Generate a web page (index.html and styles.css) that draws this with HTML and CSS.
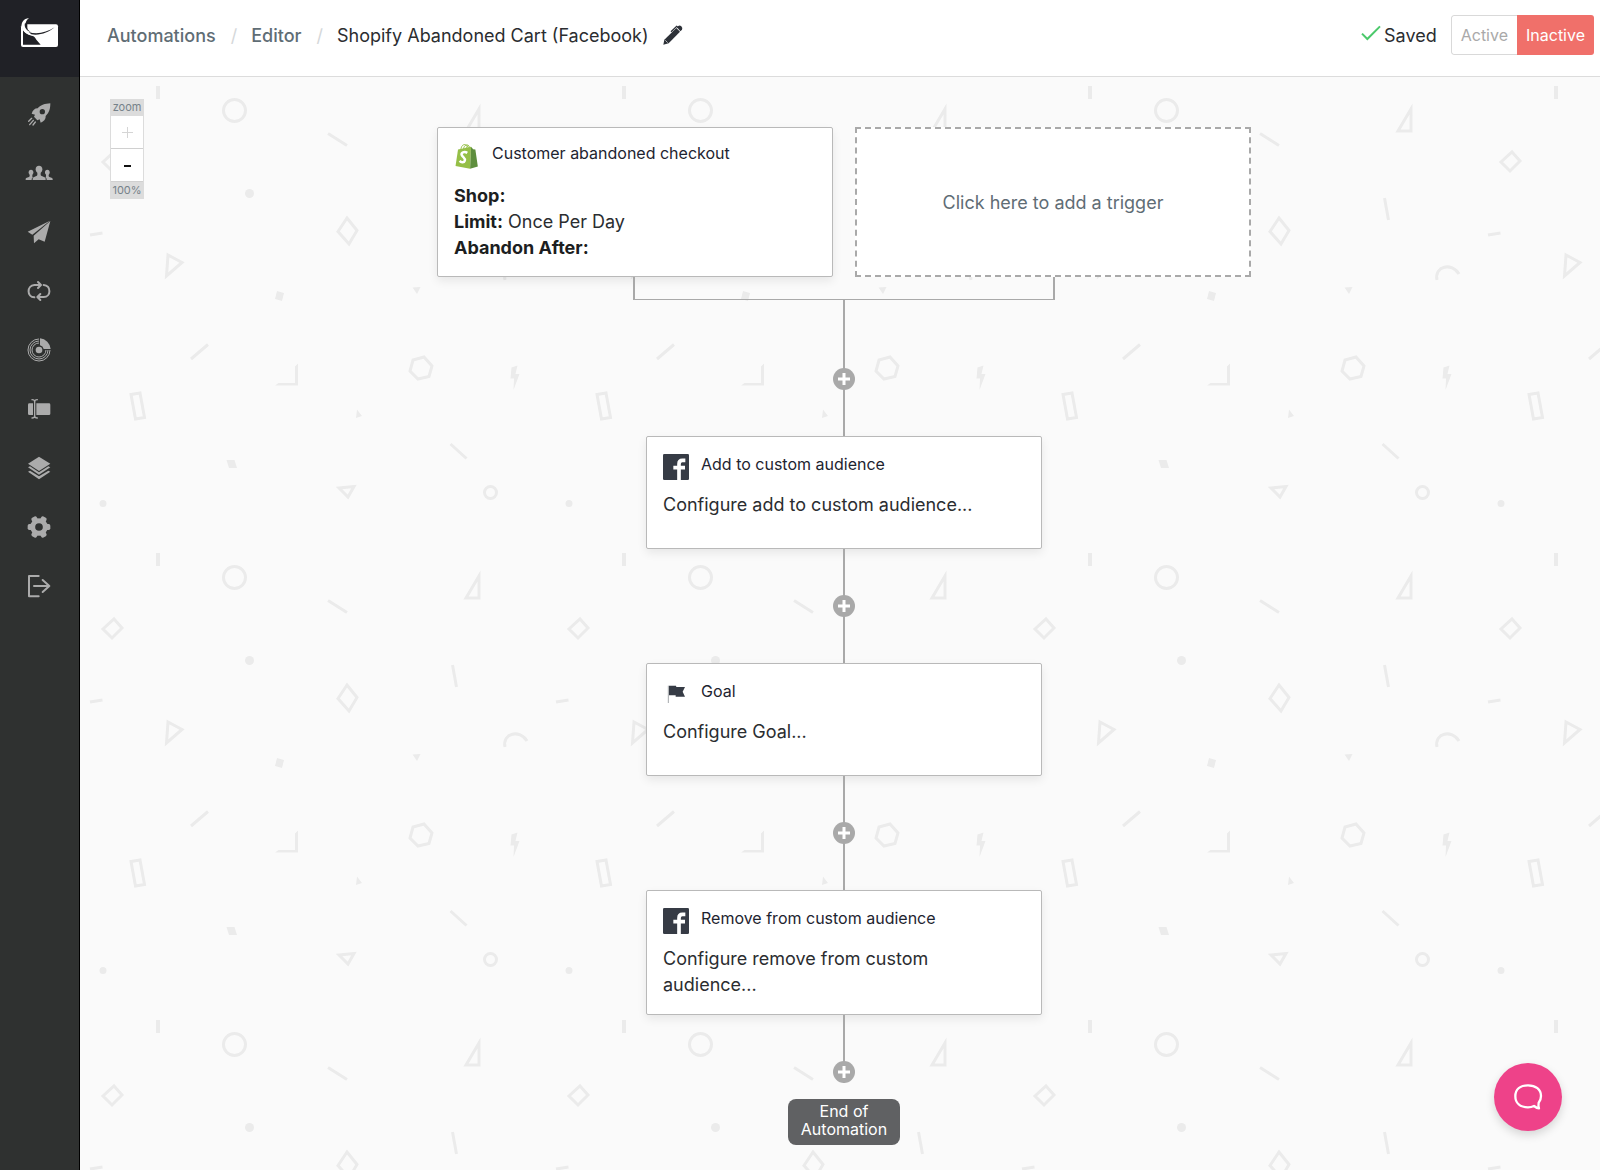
FILE: index.html
```
<!DOCTYPE html>
<html lang="en">
<head>
<meta charset="UTF-8">
<title>Shopify Abandoned Cart (Facebook)</title>
<link rel="stylesheet" href="styles.css">
</head>
<body>
<div class="sidebar">
    <a class="logo" href="#" aria-label="Home">
        <svg width="39" height="31" viewBox="0 0 117 93">
            <rect x="3" y="22" width="111" height="68" rx="6" fill="#fff"/>
            <path d="M9 38C14 46 24 53 38 57C44 59 46 63 49 68L62 83H9Z" fill="#202126"/>
            <path d="M0 18H22V36H9Z" fill="#202126"/>
            <path d="M27 3C10 5 3 18 5 30C8 45 22 54 40 56C32 50 24 46 20 38C14 26 15 12 27 3Z" fill="#fff"/>
            <path d="M15 18C11 30 20 41 32 46L24 38C20 32 20 26 19 21Z" fill="#202126"/>
            <path d="M26 45C50 53 80 47 104 31C86 47 60 56 34 52Z" fill="#202126"/>
        </svg>
    </a>
    <nav class="menu">
        <a href="#" aria-label="Campaigns">
            <svg viewBox="-6 -6 84 84">
                <path fill-rule="evenodd" d="M70 4C54 5 42 8 32 19C23 19 17 25 14 35L24 38L21 44L31 55L38 52L41 62C51 58 57 51 56 42C67 31 70 20 70 4ZM46 21A8 8 0 1 0 46 37A8 8 0 1 0 46 21Z"/>
                <path class="line thin" d="M14 49L5 58M19 55L8 68M25 60L18 69"/>
            </svg>
        </a>
        <a href="#" aria-label="Contacts">
            <svg viewBox="-6 -6 84 84">
                <ellipse cx="36" cy="25" rx="10" ry="11"/>
                <path d="M17 57V53C17 47 30 47 31 42V32H41V42C42 47 56 47 56 53V57Z"/>
                <ellipse cx="12" cy="34" rx="7" ry="8"/>
                <path d="M-4 57V54C-4 50 7 49 8 46V38H16V46C16 48 17 48 18 49C15 51 14 53 14 57Z"/>
                <ellipse cx="61" cy="34" rx="7" ry="8"/>
                <path d="M77 57V54C77 50 66 49 65 46V38H57V46C57 48 56 48 55 49C58 51 59 53 59 57Z"/>
            </svg>
        </a>
        <a href="#" aria-label="Send">
            <svg viewBox="-6 -6 84 84">
                <path d="M69 2L2 35L16 44Z"/>
                <path d="M70 3L20 47L21 70L35 58L53 65Z"/>
            </svg>
        </a>
        <a href="#" aria-label="Automations">
            <svg viewBox="-6 -6 84 84">
                <path class="line" d="M22 55C-1 54 -1 19 22 18H40M33 9L42 18L33 27M50 18C73 19 73 54 50 54H32M40 45L31 54L40 63"/>
            </svg>
        </a>
        <a href="#" aria-label="Reports">
            <svg viewBox="-6 -6 84 84">
                <path d="M39 1A35 35 0 0 1 71 33H50A14 14 0 0 0 39 22Z"/>
                <circle cx="36" cy="36" r="10"/>
                <path class="ring" d="M36 3A33 33 0 1 0 69 36M36 9A27 27 0 1 0 63 36M36 15A21 21 0 1 0 57 36"/>
            </svg>
        </a>
        <a href="#" aria-label="Forms">
            <svg viewBox="-6 -6 84 84">
                <path d="M7 19H18V54H7Q3 54 3 50V23Q3 19 7 19ZM28 19H66Q70 19 70 23V50Q70 54 66 54H28Z"/>
                <path class="line thin" d="M15 8Q23 8 23 14Q23 8 31 8M23 14V57M15 63Q23 63 23 57Q23 63 31 63"/>
            </svg>
        </a>
        <a href="#" aria-label="Templates">
            <svg viewBox="-6 -6 84 84">
                <path d="M36 2L70 23L36 45L3 23Z"/>
                <path d="M3 34L9 31L36 49L64 31L70 34L36 56Z"/>
                <path d="M3 47L9 44L36 61L64 44L70 47L36 70Z"/>
            </svg>
        </a>
        <a href="#" aria-label="Settings">
            <svg viewBox="-6 -6 84 84">
                <circle cx="36" cy="36" r="19" fill="none" stroke="#ababab" stroke-width="15"/>
                <rect x="54" y="27" width="16" height="18" rx="5"/>
                <rect x="54" y="27" width="16" height="18" rx="5" transform="rotate(60 36 36)"/>
                <rect x="54" y="27" width="16" height="18" rx="5" transform="rotate(120 36 36)"/>
                <rect x="54" y="27" width="16" height="18" rx="5" transform="rotate(180 36 36)"/>
                <rect x="54" y="27" width="16" height="18" rx="5" transform="rotate(240 36 36)"/>
                <rect x="54" y="27" width="16" height="18" rx="5" transform="rotate(300 36 36)"/>
            </svg>
        </a>
        <a href="#" aria-label="Log out">
            <svg viewBox="-6 -6 84 84">
                <path class="line" d="M35 6H6V67H35M21 36H67M47 18L67 36L47 54"/>
            </svg>
        </a>
    </nav>
</div>

<div class="page">
    <header class="topbar">
        <nav class="crumbs">
            <a href="#">Automations</a>
            <span class="sep">/</span>
            <a href="#">Editor</a>
            <span class="sep">/</span>
            <h1>Shopify Abandoned Cart (Facebook)</h1>
            <button class="edit" aria-label="Rename">
                <svg width="20" height="20" viewBox="0 0 60 60">
                    <path d="M1 59L4 44L40 9L51 20L17 55Z" fill="#2d3138"/>
                    <path d="M42 7L46 3Q50 0 55 4Q60 9 57 14L52 19Z" fill="#2d3138"/>
                    <path d="M24 20L41 4L46 8" fill="none" stroke="#2d3138" stroke-width="4"/>
                    <path d="M7 46L14 53" stroke="#fff" stroke-width="2"/>
                </svg>
            </button>
        </nav>
        <div class="status">
            <span class="saved">
                <svg width="20" height="20" viewBox="0 0 60 60"><path d="M3 26L19 42L57 4" fill="none" stroke="#4bc96b" stroke-width="6"/></svg>
                Saved
            </span>
            <div class="toggle">
                <button>Active</button>
                <button class="on">Inactive</button>
            </div>
        </div>
    </header>

    <main class="canvas">
        <div class="zoom">
            <span>zoom</span>
            <button disabled aria-label="Zoom in"><svg width="11" height="11" viewBox="0 0 11 11"><path d="M5 0h1v5h5v1h-5v5h-1v-5h-5v-1h5z"/></svg></button>
            <button aria-label="Zoom out"><svg width="11" height="11" viewBox="0 0 11 11"><path d="M2 5h7v2h-7z"/></svg></button>
            <span>100%</span>
        </div>

        <div class="flow">
            <div class="triggers">
                <section class="card">
                    <div class="head">
                        <svg class="icon" viewBox="-3 -1 80 84">
                            <path d="M17 22C18 2 34 -3 42 16M25 21C27 5 40 -2 46 14M34 18C35 10 40 6 43 8" fill="none" stroke="#95bf47" stroke-width="3"/>
                            <path d="M8 20L50 11L47 82L0 73Z" fill="#95bf47"/>
                            <path d="M50 11L57 19L64 20L72 75L47 82Z" fill="#5e8e3e"/>
                            <path d="M38 31C28 25 17 30 20 38C23 45 33 47 30 56C27 65 17 61 13 57" fill="none" stroke="#fff" stroke-width="8"/>
                        </svg>
                        <h2>Customer abandoned checkout</h2>
                    </div>
                    <p><b>Shop:</b></p>
                    <p><b>Limit:</b> Once Per Day</p>
                    <p><b>Abandon After:</b></p>
                </section>
                <button class="addtrigger">Click here to add a trigger</button>
            </div>
            <div class="bracket"></div>
            <div class="stub"></div>
            <div class="join"><button class="plus" aria-label="Add step"><svg width="22" height="22" viewBox="0 0 22 22"><path d="M11 5v12M5 11h12" stroke="#fff" stroke-width="3"/></svg></button></div>

            <section class="card">
                <div class="head">
                    <svg class="icon" viewBox="0 0 78 78">
                        <rect width="78" height="78" rx="4" fill="#363b45"/>
                        <path d="M48 78V30Q48 19 58 19H67M31 41H66" fill="none" stroke="#fff" stroke-width="11"/>
                    </svg>
                    <h2>Add to custom audience</h2>
                </div>
                <p>Configure add to custom audience...</p>
            </section>
            <div class="join"><button class="plus" aria-label="Add step"><svg width="22" height="22" viewBox="0 0 22 22"><path d="M11 5v12M5 11h12" stroke="#fff" stroke-width="3"/></svg></button></div>

            <section class="card">
                <div class="head">
                    <svg class="icon" viewBox="0 0 78 78">
                        <path d="M16 14V66" stroke="#777b82" stroke-width="2"/>
                        <path d="M18 14H39L40 18H66L59 32L66 47H38V43H18Z" fill="#363b45"/>
                    </svg>
                    <h2>Goal</h2>
                </div>
                <p>Configure Goal...</p>
            </section>
            <div class="join"><button class="plus" aria-label="Add step"><svg width="22" height="22" viewBox="0 0 22 22"><path d="M11 5v12M5 11h12" stroke="#fff" stroke-width="3"/></svg></button></div>

            <section class="card">
                <div class="head">
                    <svg class="icon" viewBox="0 0 78 78">
                        <rect width="78" height="78" rx="4" fill="#363b45"/>
                        <path d="M48 78V30Q48 19 58 19H67M31 41H66" fill="none" stroke="#fff" stroke-width="11"/>
                    </svg>
                    <h2>Remove from custom audience</h2>
                </div>
                <p>Configure remove from custom audience...</p>
            </section>
            <div class="join last"><button class="plus" aria-label="Add step"><svg width="22" height="22" viewBox="0 0 22 22"><path d="M11 5v12M5 11h12" stroke="#fff" stroke-width="3"/></svg></button></div>
            <div class="end">End of Automation</div>
        </div>
    </main>
</div>

<button class="chat" aria-label="Chat">
    <svg width="30" height="28" viewBox="0 0 90 84">
        <path d="M77 59C82 53 84 47 84 39C84 19 68 7 45 7C22 7 7 19 7 40C7 61 22 73 45 73C53 73 59 71 63 69C68 73 73 76 78 76C76 71 76 65 77 59Z" fill="none" stroke="#fff" stroke-width="7" stroke-linejoin="round"/>
    </svg>
</button>
</body>
</html>
```
FILE: styles.css
```
* {
    box-sizing: border-box;
}
body {
    margin: 0;
    display: flex;
    min-height: 100vh;
    font-family: Inter, sans-serif;
    font-size: 18px;
    color: #2b2d30;
    background: #fafafa;
}
button {
    font: inherit;
    padding: 0;
    border: 0;
    cursor: pointer;
}
a {
    text-decoration: none;
}
svg {
    display: block;
}
h1, h2, p {
    margin: 0;
    font-size: inherit;
    font-weight: 400;
}

/* sidebar */
.sidebar {
    width: 80px;
    flex: none;
    background: #2f3130;
    border-right: 1px solid #000;
}
.logo {
    display: flex;
    justify-content: center;
    height: 77px;
    padding-top: 17px;
    background: #202126;
}
.menu {
    display: flex;
    flex-direction: column;
    padding: 7px 1px 0 0;
}
.menu a {
    display: flex;
    align-items: center;
    justify-content: center;
    height: 59px;
}
.menu svg {
    width: 28px;
    height: 28px;
    fill: #ababab;
}
.menu .line, .menu .ring {
    fill: none;
    stroke: #ababab;
    stroke-width: 6;
    stroke-linecap: round;
    stroke-linejoin: round;
}
.menu .thin {
    stroke-width: 4;
}
.menu .ring {
    stroke-width: 3;
    stroke-linecap: butt;
}

/* top bar */
.page {
    flex: 1;
    min-width: 0;
    display: flex;
    flex-direction: column;
}
.topbar {
    display: flex;
    align-items: center;
    justify-content: space-between;
    height: 77px;
    padding: 0 6px 6px 27px;
    background: #fff;
    border-bottom: 1px solid #dcdcdc;
}
.crumbs {
    display: flex;
    align-items: center;
}
.crumbs a {
    color: #5f6d75;
    font-weight: 500;
}
.sep {
    margin: 0 14px 0 15px;
    color: #d5d8da;
}
.edit {
    margin-left: 14px;
    background: none;
}
.status {
    display: flex;
    align-items: center;
    gap: 14px;
}
.saved {
    display: flex;
    align-items: center;
    gap: 3px;
}
.toggle {
    display: flex;
    height: 40px;
    border-radius: 3px;
    overflow: hidden;
}
.toggle button {
    padding: 0 9px;
    font-size: 16px;
    color: #a9a9a9;
    background: #fff;
    border: 1px solid #d9d9d9;
    border-right: 0;
    border-radius: 3px 0 0 3px;
}
.toggle .on {
    color: #fff;
    background: #f0706a;
    border: 0;
    border-radius: 0;
}

/* canvas, the doodle tile repeats every 466px */
.canvas {
    position: relative;
    flex: 1;
    padding: 50px 0 24px 8px;
    background-color: #fafafa;
    background-size: 466px 467px;
    background-position: 0 -1px;
    background-image: url("data:image/svg+xml,%3Csvg xmlns='http://www.w3.org/2000/svg' width='466' height='467'%3E%3Cg fill='none' stroke='%23ebebeb' stroke-width='3'%3E%3Ccircle cx='154.5' cy='34.5' r='11'/%3E%3Cpath d='M248 57.5L267 69.5M34 76L42 85L32 95L23 86ZM267 142L277 154.5L269 168L258 155.5ZM10 159L22.500 157M88 179L102 186.500L86.500 200ZM372.500 122L376.500 144M425 204C422 190 440 186 447 198M399 33V55H386ZM111 283L128 268.500M344 281L352 290L349 300.500L338 303L330 295L333 284ZM51 318.500L60 317L64.500 341.500L55.500 343ZM370.500 368L386.500 382.500M259 412L274 410.500L268 421Z'/%3E%3Ccircle cx='410.5' cy='416.5' r='6'/%3E%3C/g%3E%3Cg fill='%23ebebeb'%3E%3Cpath d='M76 10H80V23H76ZM332.500 211.500L340.500 211L337 218ZM195 309.500H218V287.500L215 290.500V307H198.500ZM431.500 291.500L437.500 289.500L435.500 298H439.500L433.500 314L434 302.500H430.500ZM277 333.500L282 340L276 342ZM146.500 384H154.500L157 392H149ZM197 215L204 217L202 225L195 223Z'/%3E%3Ccircle cx='169.5' cy='117.5' r='4.500'/%3E%3Ccircle cx='23' cy='427.5' r='3.500'/%3E%3C/g%3E%3C/svg%3E");
}
.zoom {
    position: absolute;
    left: 30px;
    top: 22px;
    width: 34px;
    display: flex;
    flex-direction: column;
    padding: 0 1px;
    font-size: 11px;
    line-height: 17px;
    text-align: center;
    color: #76828a;
    background: #dcdcdc;
}
.zoom button {
    display: flex;
    align-items: center;
    justify-content: center;
    height: 33px;
    background: #fff;
    border-bottom: 1px solid #d0d0d0;
    fill: #111;
}
.zoom button:disabled {
    fill: #d5d5d5;
}

/* flow */
.flow {
    display: flex;
    flex-direction: column;
    align-items: center;
}
.triggers {
    display: flex;
    gap: 22px;
}
.card {
    width: 396px;
    min-height: 113px;
    padding: 16px 64px 16px 16px;
    line-height: 26px;
    font-weight: 300;
    background: #fff;
    border: 1px solid #b9b9b9;
    border-radius: 2px;
    box-shadow: 0 4px 10px rgba(0, 0, 0, .08);
}
.triggers .card {
    min-height: 150px;
    padding-top: 14px;
    padding-bottom: 12px;
}
.card b {
    font-weight: 700;
    color: #1c1e21;
}
.head {
    display: flex;
    gap: 12px;
    margin-bottom: 12px;
}
.triggers .head {
    margin-bottom: 14px;
}
.head h2 {
    font-size: 16px;
    line-height: 22px;
    color: #1e2430;
}
.icon {
    width: 26px;
    height: 26px;
    margin-top: 1px;
}
.addtrigger {
    width: 396px;
    color: #5f6d75;
    background: #fff;
    border: 2px dashed #a9a9a9;
}
.bracket {
    width: 422px;
    height: 23px;
    border: solid #a9a9a9;
    border-width: 0 2px 1px;
}
.stub {
    width: 2px;
    height: 22px;
    background: #a9a9a9;
}
.join {
    display: flex;
    align-items: center;
    height: 114px;
    background: linear-gradient(#a9a9a9, #a9a9a9) center / 2px 100% no-repeat;
}
.last {
    align-items: flex-end;
    height: 68px;
}
.plus {
    border-radius: 50%;
    background: #a9a9a9;
}
.end {
    width: 112px;
    margin-top: 16px;
    padding: 3px 8px 7px;
    font-size: 16px;
    line-height: 18px;
    text-align: center;
    color: #fff;
    background: #606163;
    border-radius: 8px;
}

.chat {
    position: fixed;
    right: 38px;
    bottom: 39px;
    width: 68px;
    height: 68px;
    display: flex;
    align-items: center;
    justify-content: center;
    border-radius: 50%;
    background: #ee4289;
    box-shadow: 0 4px 10px rgba(0, 0, 0, .15);
}
```
